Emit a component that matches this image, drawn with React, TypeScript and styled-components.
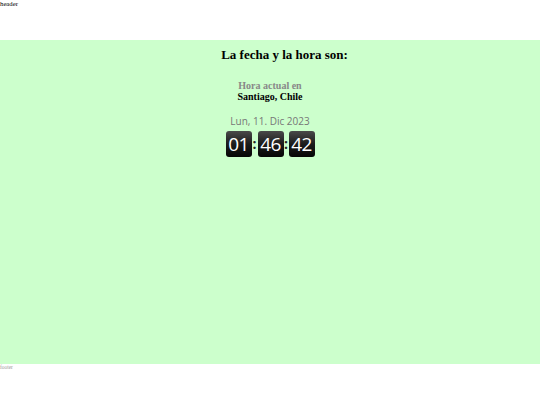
import React from 'react';
import styled, { createGlobalStyle } from 'styled-components';

const GlobalStyle = createGlobalStyle`
    html, body {
        margin: 0;
        padding: 0;
        background: #ffffff;
    }
    body {
        font-family: 'Liberation Serif', 'Times New Roman', serif;
        width: 540px;
        height: 405px;
        overflow: hidden;
    }
`;

const Page = styled.div`
    display: flex;
    flex-direction: column;
    width: 540px;
    height: 405px;
`;

const Header = styled.header`
    height: 40px;
    font-size: 6.75px;
    line-height: 8px;
    color: #000;
`;

const Main = styled.main`
    height: 324px;
    background: #ccffcc;
    display: flex;
    flex-direction: column;
    align-items: center;
    padding-top: 7px;
    box-sizing: border-box;
`;

const Title = styled.h1`
    margin: 0;
    padding-left: 29px;
    font-size: 13px;
    line-height: 15px;
    font-weight: bold;
    color: #000;
`;

const Location = styled.div`
    margin-top: 17.6px;
    display: flex;
    flex-direction: column;
    align-items: center;
    font-size: 10px;
    line-height: 11.5px;
    font-weight: bold;
`;

const LocationLine = styled.span<{ $muted?: boolean }>`
    color: ${({ $muted }) => ($muted ? '#888888' : '#000000')};
`;

const DateLine = styled.div`
    margin-top: 12.2px;
    font-family: 'Open Sans', 'DejaVu Sans', sans-serif;
    font-size: 10px;
    line-height: 12px;
    color: #777777;
`;

const Clock = styled.div`
    margin-top: 4.6px;
    display: flex;
    align-items: center;
`;

const DigitBox = styled.span`
    width: 26px;
    height: 26px;
    border-radius: 3px;
    background: linear-gradient(#4a4a4a 0%, #1c1c1c 50%, #050505 100%);
    color: #ffffff;
    font-family: 'Open Sans', 'DejaVu Sans', sans-serif;
    font-weight: 400;
    font-size: 19px;
    line-height: 26px;
    text-align: center;
    letter-spacing: -0.5px;
`;

const Separator = styled.span<{ $width: number }>`
    width: ${({ $width }) => $width}px;
    text-align: center;
    color: #222222;
    font-family: 'Open Sans', 'DejaVu Sans', sans-serif;
    font-weight: bold;
    font-size: 14px;
    line-height: 26px;
`;

const Footer = styled.footer`
    font-size: 5.4px;
    line-height: 7px;
    color: #999999;
`;

const time = ['01', '46', '42'];

export default function App() {
    return (
        <Page>
            <GlobalStyle />
            <Header>header</Header>
            <Main>
                <Title>La fecha y la hora son:</Title>
                <Location>
                    <LocationLine $muted>Hora actual en</LocationLine>
                    <LocationLine>Santiago, Chile</LocationLine>
                </Location>
                <DateLine>Lun, 11. Dic 2023</DateLine>
                <Clock>
                    {time.map((part, index) => (
                        <React.Fragment key={part + index}>
                            {index > 0 && (
                                <Separator $width={index === 1 ? 6 : 5}>:</Separator>
                            )}
                            <DigitBox>{part}</DigitBox>
                        </React.Fragment>
                    ))}
                </Clock>
            </Main>
            <Footer>footer</Footer>
        </Page>
    );
}
